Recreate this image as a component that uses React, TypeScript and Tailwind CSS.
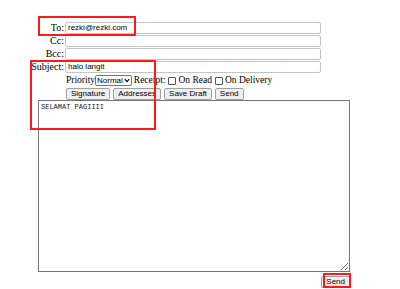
import React from "react";

const labelCls = "w-[65px] pr-[1px] text-right leading-none";
const inputCls =
    "w-[256px] h-[12px] border border-[#c4c4c4] rounded-[2px] px-[2px] text-[8px] font-['Liberation_Sans',sans-serif] outline-none";
const btnCls =
    "h-[12px] px-[4px] border border-[#a0a0a0] rounded-[2px] bg-[#efefef] text-[8px] leading-none font-['Liberation_Sans',sans-serif] text-black";
const checkCls = "inline-block w-[8px] h-[8px] border border-[#555] rounded-[1px] bg-white ml-[3px] mr-[2px]";

function Row({ label, value }: { label: string; value?: string }) {
    return (
        <div className="flex items-center h-[13px]">
            <label className={labelCls}>{label}</label>
            <input className={inputCls} defaultValue={value} />
        </div>
    );
}

export default function App() {
    return (
        <div className="relative w-[400px] h-[289px] bg-white overflow-hidden font-['Liberation_Serif',serif] text-[10px] text-black">
            <div className="pt-[21px]">
                <Row label="To:" value="rezki@rezki.com" />
                <Row label="Cc:" />
                <Row label="Bcc:" />
                <Row label="Subject:" value="halo langit" />

                {/* Priority / Receipt */}
                <div className="flex items-center h-[13px] ml-[66px] mt-[1px] leading-none text-[9.5px]">
                    <span>Priority</span>
                    <div className="flex items-center gap-[1px] h-[11px] border border-[#767676] rounded-[2px] pl-[1px] pr-[1px] text-[8px] font-['Liberation_Sans',sans-serif]">
                        <span>Normal</span>
                        <svg className="w-[6px] h-[5px]" viewBox="0 0 6 5">
                            <path d="M0.8 1.2 L3 3.6 L5.2 1.2" fill="none" stroke="#000" strokeWidth="1.2" />
                        </svg>
                    </div>
                    <span className="ml-[2px]">Receipt:</span>
                    <span className={checkCls} />
                    <span>On Read</span>
                    <span className={checkCls} />
                    <span>On Delivery</span>
                </div>

                {/* Buttons */}
                <div className="flex items-center gap-[3px] ml-[66px] h-[13px]">
                    <button className={btnCls}>Signature</button>
                    <button className={btnCls}>Addresses</button>
                    <button className={btnCls}>Save Draft</button>
                    <button className={btnCls}>Send</button>
                </div>

                <textarea
                    className="block ml-[38px] w-[312px] h-[172px] border border-[#767676] p-[2px] text-[7px] leading-[9px] font-['Liberation_Mono',monospace] text-[#222] resize-y outline-none"
                    defaultValue="SELAMAT PAGIIII"
                />

                <div className="flex justify-end w-[350px] mt-[4px]">
                    <button className={btnCls}>Send</button>
                </div>
            </div>

            {/* annotation boxes */}
            <div className="absolute left-[38px] top-[16px] w-[98px] h-[20px] border-2 border-[#ff1a1a] pointer-events-none" />
            <div className="absolute left-[30px] top-[60px] w-[126px] h-[70px] border-2 border-[#ff1a1a] pointer-events-none" />
            <div className="absolute left-[323px] top-[273px] w-[28px] h-[15px] border-2 border-[#ff1a1a] pointer-events-none" />
        </div>
    );
}
